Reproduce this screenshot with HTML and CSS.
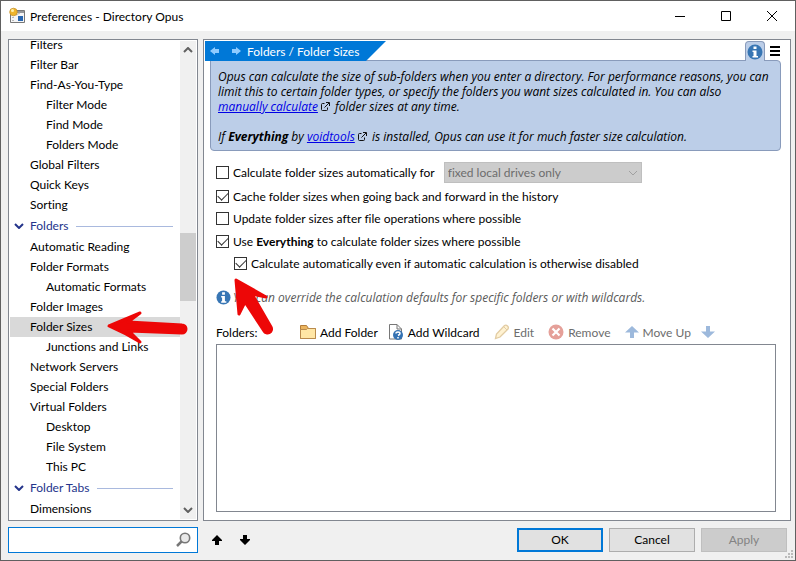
FILE: index.html
```html
<!DOCTYPE html>
<html lang="en">
<head>
<meta charset="utf-8">
<title>Preferences - Directory Opus</title>
<link rel="stylesheet" href="styles.css">
</head>
<body>
<svg class="defs" aria-hidden="true">
  <symbol id="external" viewBox="0 0 9 9"><path d="M3.5 1.5h-2q-1 0-1 1v5q0 1 1 1h4q1 0 1-1v-2M3.5 5.5L8 1M5 .5h3.5V4" fill="none" stroke="#111"/></symbol>
  <symbol id="info" viewBox="0 0 16 16"><circle cx="8" cy="8" r="7.5" fill="#3876b4"/><path d="M6.500 2.500h3v2.500h-3zM5.500 6.500h4V12h1.500v1.500h-5.500V12h1V8h-1z" fill="#fff"/></symbol>
  <symbol id="arrow-up" viewBox="0 0 14 12"><path d="M7 0l7 6.500H9V12H5V6.500H0z" fill="currentColor"/></symbol>
  <symbol id="nav" viewBox="0 0 10 8"><path d="M0 4l5-4v2h4v4H5v2z" fill="#8ecbff"/></symbol>
  <symbol id="chevron" viewBox="0 0 10 6"><path d="M1 1l4 4 4-4" fill="none" stroke="currentColor" stroke-width="2"/></symbol>
</svg>
<div class="window">
  <header class="titlebar">
    <svg class="app-icon" viewBox="0 0 17 18"><path d="M1.500 3.500h14v12h-14z" fill="#f5f5f6" stroke="#777"/><path d="M7 4h8v2H7z" fill="#96979a"/><path d="M9 9h5v5H9z" fill="#2867b2"/><path d="M3 10.500h2M3 13.500h2M7 8l4-2" stroke="#b7b7b7"/><circle cx="4.500" cy="5" r="3.800" fill="#efb52d" stroke="#c18b22" stroke-width=".7"/><circle cx="3.500" cy="3.500" r="1.500" fill="#fff0ad"/></svg>
    <h1>Preferences - Directory Opus</h1>
    <div class="window-buttons">
      <button aria-label="Minimize"><svg viewBox="0 0 10 10"><path d="M0 5.500h10" stroke="#000"/></svg></button>
      <button aria-label="Maximize"><svg viewBox="0 0 10 10"><path d="M.5.5h9v9h-9z" fill="none" stroke="#000"/></svg></button>
      <button aria-label="Close"><svg viewBox="0 0 10 10"><path d="M0 0l10 10M10 0L0 10" stroke="#000"/></svg></button>
    </div>
  </header>
  <main class="content">
    <nav class="sidebar" aria-label="Preference pages">
      <ul class="tree">
        <li>Filters</li>
        <li>Filter Bar</li>
        <li>Find-As-You-Type</li>
        <li class="child">Filter Mode</li>
        <li class="child">Find Mode</li>
        <li class="child">Folders Mode</li>
        <li>Global Filters</li>
        <li>Quick Keys</li>
        <li>Sorting</li>
        <li class="group"><svg><use href="#chevron"/></svg>Folders</li>
        <li>Automatic Reading</li>
        <li>Folder Formats</li>
        <li class="child">Automatic Formats</li>
        <li>Folder Images</li>
        <li class="selected">Folder Sizes</li>
        <li class="child">Junctions and Links</li>
        <li>Network Servers</li>
        <li>Special Folders</li>
        <li>Virtual Folders</li>
        <li class="child">Desktop</li>
        <li class="child">File System</li>
        <li class="child">This PC</li>
        <li class="group"><svg><use href="#chevron"/></svg>Folder Tabs</li>
        <li>Dimensions</li>
      </ul>
      <div class="scrollbar">
        <svg class="flip"><use href="#chevron"/></svg>
        <div class="track"><div class="thumb"></div></div>
        <svg><use href="#chevron"/></svg>
      </div>
      <svg class="pointer pointer-left" viewBox="0 0 80 36" aria-hidden="true"><path d="M2 16L33 3L21 12L75 15a3 3 0 0 1 0 8L22 21L33 32Q18 23 2 16z"/></svg>
    </nav>
    <section class="page">
      <div class="page-head">
        <div class="banner"><svg><use href="#nav"/></svg><svg class="mirror"><use href="#nav"/></svg><h2>Folders / Folder Sizes</h2></div>
        <button class="info-tab" aria-label="Information"><svg><use href="#info"/></svg></button>
        <button class="menu" aria-label="Menu"><svg viewBox="0 0 10 10"><path d="M0 1h10M0 5h10M0 9h10" stroke="#000" stroke-width="2"/></svg></button>
      </div>
      <div class="description">
        <p>Opus can calculate the size of sub-folders when you enter a directory. For performance reasons, you can limit this to certain folder types, or specify the folders you want sizes calculated in. You can also <a href="#">manually calculate</a><svg><use href="#external"/></svg> folder sizes at any time.</p>
        <p>If <b>Everything</b> by <a href="#">voidtools</a><svg><use href="#external"/></svg> is installed, Opus can use it for much faster size calculation.</p>
      </div>
      <div class="settings">
        <div class="option first"><label><input type="checkbox">Calculate folder sizes automatically for</label>
          <span class="drop"><select disabled aria-label="Drive types"><option>fixed local drives only</option></select><svg viewBox="0 0 10 6"><path d="M1 1l4 4 4-4" fill="none" stroke="#a0a0a0"/></svg></span></div>
        <div class="option"><label><input type="checkbox" checked>Cache folder sizes when going back and forward in the history</label></div>
        <div class="option"><label><input type="checkbox">Update folder sizes after file operations where possible</label></div>
        <div class="option main"><label><input type="checkbox" checked><span>Use <b>Everything</b> to calculate folder sizes where possible</span></label></div>
        <div class="option nested"><label><input type="checkbox" checked>Calculate automatically even if automatic calculation is otherwise disabled</label></div>
        <p class="note"><svg><use href="#info"/></svg>You can override the calculation defaults for specific folders or with wildcards.</p>
        <div class="toolbar">
          <span class="toolbar-label">Folders:</span>
          <button><svg viewBox="0 0 16 16"><path d="M.5 1.500h6l2 3h7v10H.5z" fill="#eab45e" stroke="#b47d3a"/><path d="M.5 5.500h6l1-1h8v10H.5z" fill="#ffe6a5" stroke="#b98a4c"/></svg>Add Folder</button>
          <button class="wide"><svg viewBox="0 0 16 16"><path d="M1.500.5H9L13.500 5v10h-12z" fill="#fff" stroke="#777"/><path d="M9 .5V5h4.500" fill="none" stroke="#777"/><circle cx="10" cy="11" r="5" fill="#3472b3"/><path d="M8 9.500Q8 8 10 8T12 9.500Q12 10.500 10 11.500M10 13v1.500" fill="none" stroke="#fff" stroke-width="1.500"/></svg>Add Wildcard</button>
          <button class="wide" disabled><svg viewBox="0 0 16 16"><path d="M1.500 14.500l1-4.500 8-8.500q1.500-1 3 .5t.5 3L6 13z" fill="#fff2d2" stroke="#e2cca3" stroke-width="1.300"/><path d="M10 3l3 3" stroke="#e2cca3"/></svg>Edit</button>
          <button class="wide" disabled><svg viewBox="0 0 16 16"><circle cx="8" cy="8" r="7.500" fill="#e5a099"/><path d="M4.500 4.500l7 7M11.500 4.500l-7 7" stroke="#fff" stroke-width="2.200"/></svg>Remove</button>
          <button class="move" disabled><svg><use href="#arrow-up"/></svg>Move Up</button>
          <button class="move" disabled aria-label="Move Down"><svg class="flip"><use href="#arrow-up"/></svg></button>
        </div>
        <div class="folder-list" role="listbox" aria-label="Folders"></div>
      </div>
      <svg class="pointer pointer-up" viewBox="0 0 40 58" aria-hidden="true"><path d="M3 2L33 19L19 16L38 49a3 3 0 0 1-7 4L12 24L6 36z"/></svg>
    </section>
  </main>
  <footer class="footer">
    <label class="search"><input type="text" aria-label="Search preferences"><svg viewBox="0 0 15 15"><path d="M1 14l5-5" stroke="#777" stroke-width="2.500"/><circle cx="9" cy="6" r="4.700" fill="#e9e9e9" stroke="#777" stroke-width="1.600"/></svg></label>
    <div class="steps">
      <button aria-label="Previous match"><svg viewBox="0 0 10 10"><path d="M5 0l5 5v1H7v4H3V6H0V5z"/></svg></button>
      <button aria-label="Next match"><svg class="flip" viewBox="0 0 10 10"><path d="M5 0l5 5v1H7v4H3V6H0V5z"/></svg></button>
    </div>
    <div class="actions"><button class="default">OK</button><button>Cancel</button><button disabled>Apply</button></div>
    <svg class="grip" viewBox="0 0 8 8"><path d="M6 0h2v2H6zM3 3h2v2H3zM6 3h2v2H6zM0 6h2v2H0zM3 6h2v2H3zM6 6h2v2H6z" fill="#bbb"/></svg>
  </footer>
</div>
</body>
</html>
```
FILE: styles.css
```css
* { box-sizing: border-box; }
body, h1, h2, p, ul { margin: 0; padding: 0; }
body { font: 12px/15px Lato, "Open Sans", sans-serif; font-variant-ligatures: none; color: #000; }
button, input, select { font: inherit; color: inherit; margin: 0; }
button { border: 0; padding: 0; background: none; }
svg { display: block; flex: none; }
.defs { display: none; }
.flip { transform: rotate(180deg); }
.mirror { transform: scaleX(-1); }

.window { display: flex; flex-direction: column; height: 100vh; border: 1px solid #606060; background: #f0f0f0; }
.titlebar { display: flex; align-items: center; height: 30px; background: #fff; padding-left: 8px; }
.app-icon { width: 17px; height: 18px; margin-right: 4px; }
.titlebar h1 { font-size: 12px; font-weight: 400; flex: 1; }
.window-buttons { display: flex; }
.window-buttons button { width: 46px; height: 29px; display: grid; place-items: center; }
.window-buttons svg { width: 10px; height: 10px; }

.content { flex: 1; min-height: 0; display: grid; grid-template-columns: 190px 1fr; gap: 5px; padding: 8px 4px 0 7px; }
.sidebar, .page { position: relative; border: 1px solid #828790; background: #fff; padding: 1px; min-height: 0; }
.sidebar { display: flex; }
.tree { flex: 1; list-style: none; display: flex; flex-direction: column; justify-content: flex-end; overflow: hidden; }
.tree li { flex: none; height: 20px; line-height: 20px; padding-left: 20px; white-space: nowrap; }
.tree .child { padding-left: 36px; }
.tree .selected { background: #d9d9d9; }
.tree .group { height: 22px; display: flex; align-items: center; padding: 0 7px 0 4px; color: #24348b; }
.tree .group svg { width: 10px; height: 6px; margin-right: 6px; }
.tree .group::after { content: ""; flex: 1; height: 1px; margin-left: 8px; background: #a9b9de; }
.scrollbar { width: 16px; background: #f0f0f0; display: flex; flex-direction: column; align-items: center; padding: 6px 0; color: #606060; }
.scrollbar svg { width: 10px; height: 6px; }
.track { flex: 1; align-self: stretch; }
.thumb { height: 68px; margin-top: 180px; background: #cdcdcd; }

.page { display: flex; flex-direction: column; }
.page-head { display: flex; height: 20px; padding-right: 9px; }
.banner { display: flex; align-items: center; gap: 11px; width: 181px; height: 20px; padding-left: 5px; background: #0078d7; color: #fff; clip-path: polygon(0 0, 100% 0, 161px 100%, 0 100%); }
.banner svg { width: 10px; height: 8px; }
.banner h2 { font-size: 12px; font-weight: 400; margin-left: -5px; white-space: nowrap; }
.info-tab { width: 20px; height: 20px; margin-left: auto; display: grid; place-items: center; background: #bccee8; border: 1px solid #899bbb; border-bottom: 0; border-radius: 4px 4px 0 0; z-index: 1; }
.info-tab svg { width: 16px; height: 16px; }
.menu { width: 10px; margin-left: 5px; display: grid; place-items: center; }
.menu svg { width: 10px; height: 10px; }
.description { margin: -1px 8px 0 5px; padding: 8px 7px 6px; background: #bccee8; border: 1px solid #899bbb; border-radius: 0 4px 4px 4px; font-family: "Open Sans", sans-serif; font-style: italic; }
.description p + p { margin-top: 15px; }
.description svg { display: inline-block; width: 9px; height: 9px; margin: 0 2px 0 3px; }
.description a { color: #0000e6; text-decoration: underline; white-space: nowrap; }

.settings { flex: 1; min-height: 0; display: flex; flex-direction: column; padding: 10px 13px 7px 11px; }
.option { display: flex; align-items: center; height: 22px; }
.option.first { height: 23px; margin-bottom: 1px; }
.option.main { margin-top: 1px; }
.option label { display: flex; align-items: center; }
.option input { appearance: none; width: 13px; height: 13px; margin-right: 4px; border: 1px solid #333; background: #fff; display: grid; place-items: center; }
.option input:checked::before { content: ""; width: 9px; height: 5px; border: solid #333; border-width: 0 0 1px 1px; transform: translateY(-1px) rotate(-45deg); }
.nested { padding-left: 18px; }
.drop { position: relative; width: 198px; margin-left: 9px; }
.drop select { display: block; appearance: none; width: 100%; height: 21px; padding: 0 3px; background: #ccc; border: 1px solid #bfbfbf; border-radius: 0; color: #6d6d6d; opacity: 1; }
.drop svg { position: absolute; right: 4px; top: 8px; width: 10px; height: 6px; }
.note { display: flex; align-items: center; gap: 2px; margin-top: 15px; height: 16px; font-family: "Open Sans", sans-serif; font-style: italic; color: #5a5a5a; }
.note svg { width: 15px; height: 15px; }
.toolbar { display: flex; align-items: center; height: 20px; margin: 17px 0 2px; }
.toolbar-label { width: 84px; }
.toolbar button { display: flex; align-items: center; gap: 4px; margin-right: 10px; white-space: nowrap; }
.toolbar .wide { margin-right: 14px; }
.toolbar svg { width: 16px; height: 16px; }
.toolbar button:disabled { color: #6d6d6d; }
.toolbar .move svg { width: 14px; height: 12px; color: #9db9dc; }
.folder-list { flex: 1; border: 1px solid #828790; background: #fff; }

/* Annotation arrows lie over the controls they point at. */
.pointer { position: absolute; fill: #ed0707; stroke: #ed0707; stroke-width: 3px; stroke-linejoin: round; overflow: visible; }
.pointer-left { left: 98px; top: 270px; width: 80px; height: 36px; }
.pointer-up { left: 29px; top: 238px; width: 40px; height: 58px; }

.footer { position: relative; display: flex; align-items: center; height: 39px; padding: 0 8px 2px 7px; }
.search { display: flex; align-items: center; width: 190px; height: 26px; background: #fff; border: 1px solid #0078d7; padding-right: 6px; }
.search input { flex: 1; min-width: 0; border: 0; outline: 0; background: none; }
.search svg { width: 15px; height: 15px; }
.steps { display: flex; gap: 18px; margin-left: 14px; }
.steps svg { width: 10px; height: 10px; }
.actions { display: flex; gap: 6px; margin-left: auto; }
.actions button { width: 86px; height: 24px; background: #e1e1e1; border: 1px solid #adadad; }
.actions .default { border: 2px solid #0078d7; }
.actions button:disabled { background: #ccc; border-color: #bfbfbf; color: #838383; }
.grip { position: absolute; right: 2px; bottom: 2px; width: 8px; height: 8px; }
```
